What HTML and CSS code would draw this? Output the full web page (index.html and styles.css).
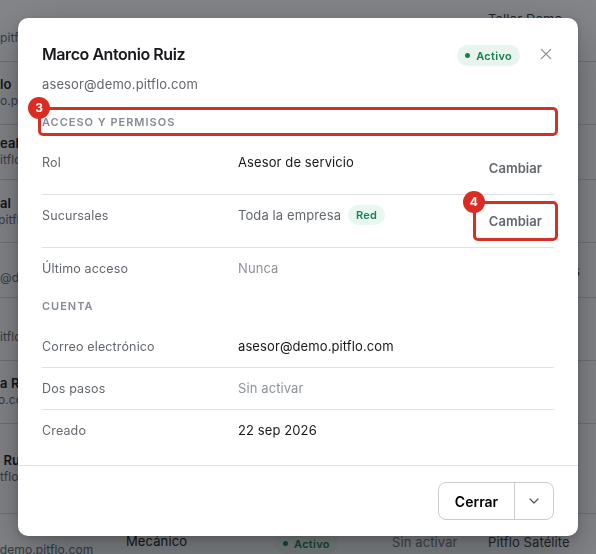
FILE: index.html
```html
<!DOCTYPE html>
<html lang="es">
<head>
<meta charset="utf-8">
<title>Pitflo</title>
<link rel="stylesheet" href="styles.css">
</head>
<body>
<main class="users">
  <div class="user h62"><div class="who"><b>&nbsp;</b><span>pitfl</span></div><div></div><div></div><div></div><div class="branch">Taller Demo</div></div>
  <div class="user h63"><div class="who"><b>lo</b><span>o.pit</span></div></div>
  <div class="user h55"><div class="who"><b>eal</b><span>itflo</span></div></div>
  <div class="user h63 low"><div class="who"><b>al</b><span class="cut">pitflo</span></div></div>
  <div class="user h55"><div class="who"><b>&nbsp;</b><span>@d</span></div><div></div><div></div><div></div><div class="branch end">s</div></div>
  <div class="user h63"><div class="who"><b>&nbsp;</b><span>itflo</span></div></div>
  <div class="user h63"><div class="who"><b>a R</b><span class="cut">o.co</span></div></div>
  <div class="user h90"><div class="who"><b>&nbsp;Ru</b><span>tflo</span></div></div>
  <div class="user h63 last"><div class="who"><span class="far">@demo.pitflo.com</span></div><div class="role">Mecánico</div><div class="state"><span class="pill active"><i></i>Activo</span></div><div class="off">Sin activar</div><div class="branch">Pitflo Satélite</div></div>
</main>
<div class="overlay">
  <section class="modal">
    <header class="head">
      <div><h1>Marco Antonio Ruiz</h1><p>asesor@demo.pitflo.com</p></div>
      <div class="tools"><span class="pill active"><i></i>Activo</span>
        <svg class="close" viewBox="0 0 12 12"><path d="M1.3 1.3l9.4 9.4M10.7 1.3l-9.4 9.4"/></svg></div>
    </header>
    <div class="body">
      <h2 class="first">ACCESO Y PERMISOS<span class="mark wide"><em>3</em></span></h2>
      <div class="row tall"><span class="label">Rol</span><span class="value">Asesor de servicio</span><button class="change">Cambiar</button></div>
      <div class="row tall"><span class="label">Sucursales</span><span class="value soft">Toda la empresa<span class="pill red">Red</span></span><button class="change">Cambiar<span class="mark around"><em>4</em></span></button></div>
      <div class="row end"><span class="label">Último acceso</span><span class="value faint">Nunca</span></div>
      <h2>CUENTA</h2>
      <div class="row"><span class="label">Correo electrónico</span><span class="value">asesor@demo.pitflo.com</span></div>
      <div class="row"><span class="label">Dos pasos</span><span class="value faint">Sin activar</span></div>
      <div class="row end"><span class="label">Creado</span><span class="value">22 sep 2026</span></div>
    </div>
    <footer class="foot">
      <div class="split"><button class="main">Cerrar</button><button class="more"><svg viewBox="0 0 10 6"><path d="M1 1l4 4 4-4"/></svg></button></div>
    </footer>
  </section>
</div>
</body>
</html>
```
FILE: styles.css
```css
* { box-sizing: border-box; }
body { margin: 0; width: 596px; height: 554px; overflow: hidden; background: #f8f9fb; font: 13px/20px Inter, "Liberation Sans", sans-serif; letter-spacing: .11px; color: #16181b; }
h1, h2, p { margin: 0; }
button { font: inherit; letter-spacing: inherit; background: none; border: 0; padding: 0; }

.users { width: 596px; }
.user { display: grid; grid-template-columns: 126px 149px 117px 96px 108px; border-bottom: 1px solid #d0d3d7; padding-top: 13px; white-space: nowrap; }
.h55 { height: 55px; padding-top: 9px; }
.h62 { height: 62px; padding-top: 12px; }
.h63 { height: 63px; }
.h90 { height: 90px; padding-top: 27px; }
.who { display: flex; flex-direction: column; }
.who b { font-weight: 600; line-height: 18px; }
.who span { color: #62686f; font-size: 12px; line-height: 16px; }
.who .cut { margin-left: -2px; }
.who .far { margin-left: -12px; }
.h62 .branch { margin-top: -3px; }
.low { padding-top: 14px; }
.branch { color: #353a40; }
.branch.end { padding: 9px 0 0 85px; }
.last { padding-top: 17px; }
.last .who { padding-top: 11px; }
.off, .last .branch { margin-top: 1px; }
.off { color: #70767d; }

.pill { display: inline-flex; align-items: center; height: 21px; border-radius: 11px; font-size: 11px; font-weight: 600; letter-spacing: .3px; }
.active { padding: 0 8px; gap: 6px; background: #e8f4ed; color: #18804a; }
.active i { width: 5px; height: 5px; border-radius: 50%; background: currentColor; }
.red { height: 20px; margin-left: 7px; padding: 0 8px; letter-spacing: .2px; background: #e8f7ef; color: #16845a; }

.overlay { position: fixed; inset: 0; padding: 18px; background: rgba(16, 20, 26, .5); }
.modal { width: 560px; height: 518px; display: flex; flex-direction: column; background: #fff; border-radius: 10px; box-shadow: 0 16px 48px rgba(0, 0, 0, .32), 0 2px 6px rgba(0, 0, 0, .16); }
.head { display: flex; justify-content: space-between; height: 86px; padding: 24px 24px 0; }
h1 { font-size: 16px; line-height: 24px; font-weight: 600; letter-spacing: -.44px; }
.head p { margin-top: 8px; color: #62676e; }
.tools { display: flex; align-items: center; height: 24px; gap: 20px; padding: 3px 2px 0 0; }
.close { width: 12px; height: 12px; margin-top: -3px; fill: none; stroke: #858a91; stroke-width: 1.2; stroke-linecap: round; }

.body { flex: 1; padding: 8px 24px 0; }
h2 { position: relative; height: 20px; font-size: 11px; line-height: 20px; font-weight: 600; letter-spacing: 1px; color: #858b93; margin: 6px 0 10px; }
h2.first { margin: 0 0 10px; }
.row { display: grid; grid-template-columns: 196px 1fr auto; height: 42px; padding-top: 10px; border-bottom: 1px solid #e0e1e4; }
.row.tall { height: 53px; }
.row.end { border-bottom: 0; }
.label, .soft { color: #62676e; }
.value { display: flex; height: 20px; align-items: center; letter-spacing: .1px; }
.label { font-size: 12.5px; line-height: 21px; letter-spacing: .14px; }
.faint { color: #8d9299; }
.change { position: relative; height: 34px; margin-top: -1px; padding: 0 12px; font-weight: 600; letter-spacing: .04px; color: #62676e; }

.mark { position: absolute; border: 3px solid #d13228; border-radius: 5px; }
.mark em { position: absolute; left: -13px; top: -13px; width: 22px; height: 22px; border-radius: 50%; background: #dc2b22; color: #fff; font: 700 12px/22px Inter, sans-serif; letter-spacing: 0; text-align: center; }
.wide { inset: -5px -4px -4px; }
.around { inset: -3px -4px; }

.foot { display: flex; justify-content: flex-end; height: 71px; padding: 16px 24px; border-top: 1px solid #e0e1e4; }
.split { display: flex; width: 116px; height: 38px; border: 1px solid #cbcccf; border-radius: 8px; }
.main { width: 75px; padding-top: 2px; font-size: 14px; font-weight: 600; letter-spacing: 0; }
.more { flex: 1; display: flex; align-items: center; justify-content: center; border-left: 1px solid #cbcccf; }
.more svg { width: 10px; height: 6px; fill: none; stroke: #51565c; stroke-width: 1.2; stroke-linecap: round; stroke-linejoin: round; }
```
